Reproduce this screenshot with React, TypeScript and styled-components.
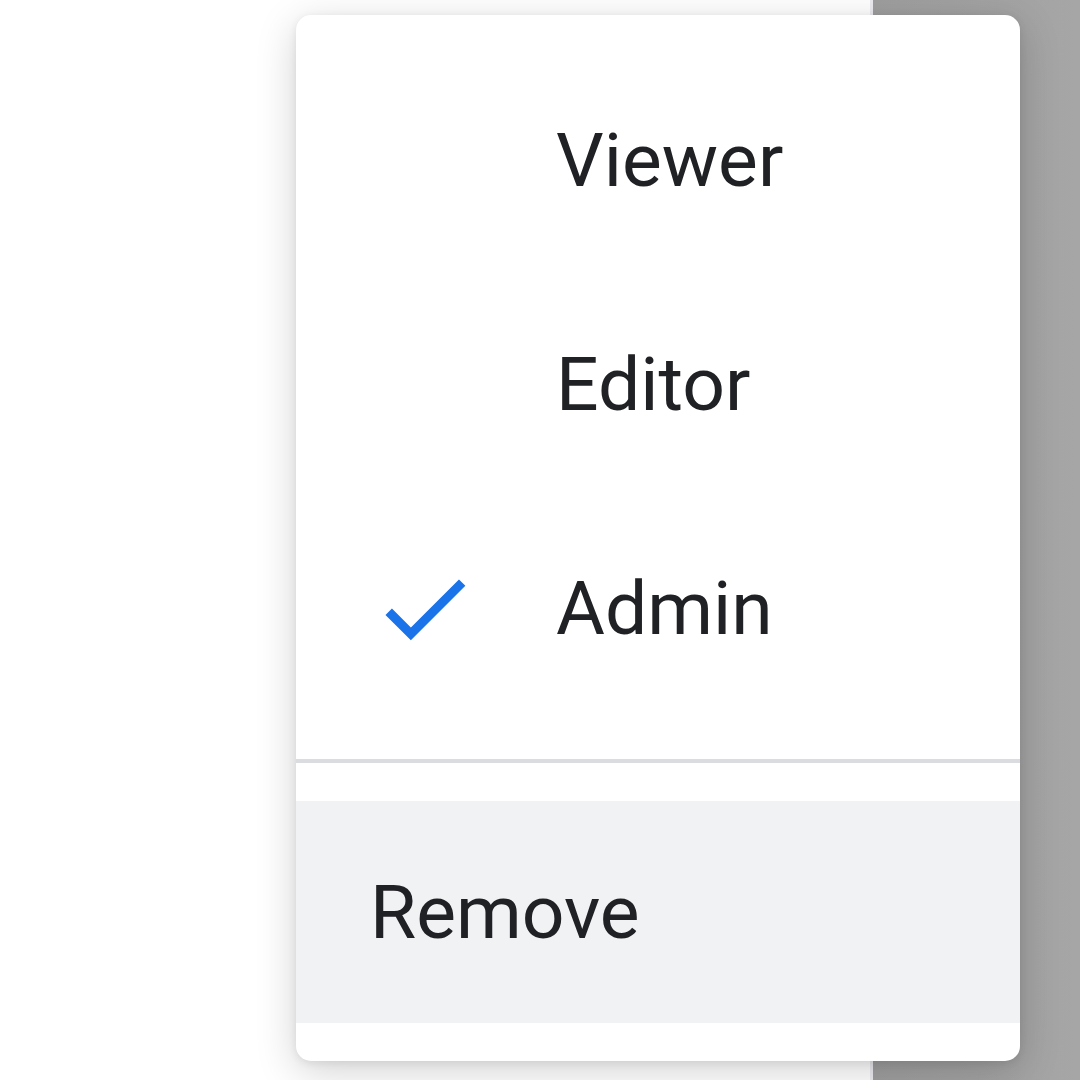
import styled, { createGlobalStyle } from "styled-components";

const GlobalStyle = createGlobalStyle`
  html, body {
    margin: 0;
    padding: 0;
    width: 1080px;
    height: 1080px;
    overflow: hidden;
    font-family: Roboto, "Liberation Sans", sans-serif;
  }
`;

const Screen = styled.div`
  width: 1080px;
  height: 1080px;
  display: grid;
  grid-template-columns: 870px 3px 1fr;
  position: relative;
`;

const PagePane = styled.div`
  background: #ffffff;
`;

const PaneEdge = styled.div`
  background: #ebebf0;
`;

const Scrim = styled.div`
  background: linear-gradient(90deg, #9e9e9e, #a6a6a6);
`;

const Menu = styled.div`
  position: absolute;
  left: 296px;
  top: 15px;
  width: 724px;
  height: 1046px;
  box-sizing: border-box;
  padding: 33px 0 38px;
  background: #ffffff;
  border-radius: 15px;
  box-shadow: 0 10px 40px rgba(0, 0, 0, 0.18), 0 2px 8px rgba(0, 0, 0, 0.08);
  display: flex;
  flex-direction: column;
  overflow: hidden;
`;

const Item = styled.div<{ $active?: boolean; $height: number }>`
  height: ${(p) => p.$height}px;
  display: flex;
  align-items: center;
  padding-left: 74px;
  background: ${(p) => (p.$active ? "#f1f2f4" : "transparent")};
  color: #202124;
  font-size: 75px;
  flex-shrink: 0;
`;

const CheckSlot = styled.div`
  width: 186px;
  height: 109px;
  display: flex;
  align-items: center;
  flex-shrink: 0;
`;

const DividerZone = styled.div`
  height: 81px;
  display: flex;
  align-items: center;
  flex-shrink: 0;
`;

const Divider = styled.div`
  width: 100%;
  height: 4px;
  background: #dadce0;
`;

const Check = () => (
  <svg width="109" height="109" viewBox="0 0 24 24" fill="#1a73e8">
    <path d="M9 16.17L4.83 12l-1.42 1.41L9 19 21 7l-1.41-1.41z" />
  </svg>
);

const roles = ["Viewer", "Editor", "Admin"];

export default function App() {
  const current = "Admin";
  return (
    <>
      <GlobalStyle />
      <Screen>
        <PagePane />
        <PaneEdge />
        <Scrim />
        <Menu>
          {roles.map((r) => (
            <Item key={r} $height={224}>
              <CheckSlot>{r === current && <Check />}</CheckSlot>
              {r}
            </Item>
          ))}
          <DividerZone>
            <Divider />
          </DividerZone>
          <Item $active $height={222}>
            Remove
          </Item>
        </Menu>
      </Screen>
    </>
  );
}
